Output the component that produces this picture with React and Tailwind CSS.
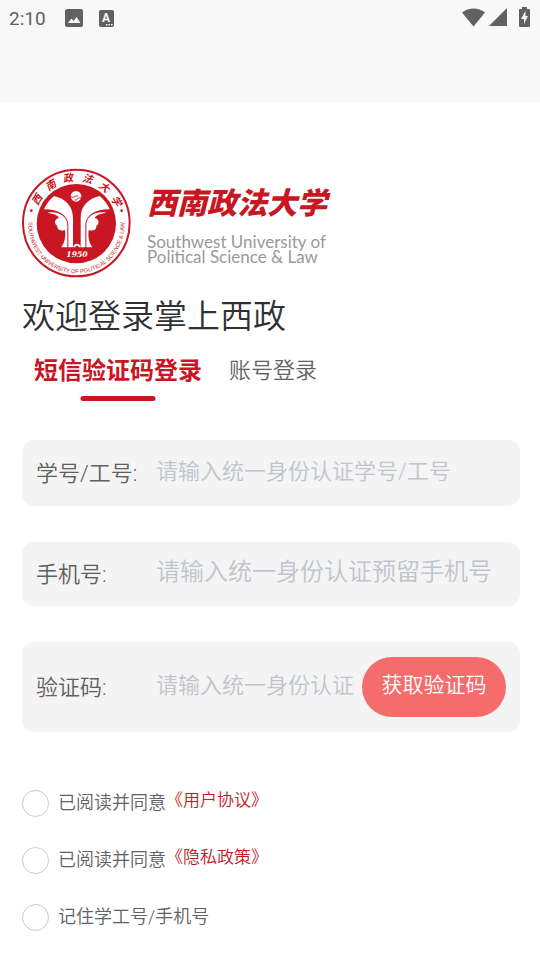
import React, { useState } from 'react'

const sealChars = [
  { char: '西', offset: '17%' },
  { char: '南', offset: '31%' },
  { char: '政', offset: '44%' },
  { char: '法', offset: '58%' },
  { char: '大', offset: '71%' },
  { char: '学', offset: '84%' },
]

const Seal = () => (
  <svg viewBox="0 0 330 330" className="w-[110px] h-[110px] shrink-0" role="img" aria-label="西南政法大学">
    <defs>
      <path id="sealTop" d="M 37 165 A 126 126 0 0 1 289 165" />
      <path id="sealBottom" d="M 21 148 A 144 144 0 1 0 305 148" />
      <g id="arm">
        <path d="M96 84 C130 92 153 114 153 150 V238 H139 V170 C137 142 112 124 66 124 C72 108 84 94 96 84 Z" />
        <path d="M136 238 H118 C130 220 131 204 129 186 C122 190 104 188 106 174 C95 168 98 150 112 150 C106 142 98 137 76 134 C112 128 136 146 136 172 Z" />
      </g>
    </defs>
    <circle cx="163" cy="165" r="160" fill="#fff" stroke="#c81623" strokeWidth="6" />
    <circle cx="163" cy="167" r="119" fill="#c81623" />
    <g fill="#c81623">
      {sealChars.map(({ char, offset }) => (
        <text key={char} fontSize="31" fontWeight="700" fontStyle="italic" fontFamily="'Noto Sans CJK SC', sans-serif" textAnchor="middle">
          <textPath href="#sealTop" startOffset={offset}>{char}</textPath>
        </text>
      ))}
      <text fontSize="17" fontWeight="400" fontFamily="'Liberation Sans Narrow', sans-serif" textAnchor="middle">
        <textPath href="#sealBottom" startOffset="50%">SOUTHWEST UNIVERSITY OF POLITICAL SCIENCE &amp; LAW</textPath>
      </text>
      <circle cx="28" cy="128" r="4" />
      <circle cx="299" cy="128" r="4" />
    </g>
    <g fill="#fff">
      <use href="#arm" />
      <use href="#arm" transform="translate(329 0) scale(-1 1)" />
      <circle cx="162" cy="85" r="16" />
      <path d="M154 238 C154 224 176 224 176 238 H170 C170 232 160 232 160 238 Z" />
    </g>
    <path d="M145 84 C154 94 160 80 168 84 M158 96 C166 98 168 86 179 90" fill="none" stroke="#c81623" strokeWidth="3" />
    <text x="165" y="266" fontSize="23" fontWeight="700" fontStyle="italic" fontFamily="'DejaVu Serif', serif" textAnchor="middle" fill="#fff">1950</text>
  </svg>
)

const StatusBar = () => (
  <div className="flex h-9 items-center justify-between pl-[9px] pr-[10px] text-[#616161]">
    <div className="flex items-center">
      <span className="pt-[2px] text-[19px] font-normal">2:10</span>
      <svg viewBox="0 0 18 18" className="ml-[19px] h-[18px] w-[18px]">
        <rect width="18" height="18" rx="2" fill="currentColor" />
        <path d="M3 14 L6.5 9.5 L8.5 12 L11.5 8 L15.5 14 Z" fill="#f8f8f8" />
      </svg>
      <svg viewBox="0 0 15 17" className="ml-4 h-[17px] w-[15px]">
        <rect width="15" height="17" rx="2" fill="currentColor" />
        <text x="7" y="12" fontSize="12" fontWeight="700" textAnchor="middle" fill="#f8f8f8">A</text>
        <path d="M7 14h1.500v1.500h-1.500z M9.500 14h1.500v1.500h-1.500z M12 14h1.500v1.500h-1.500z" fill="#f8f8f8" />
      </svg>
    </div>
    <div className="flex items-center pb-[2px]">
      <svg viewBox="0 0 23 19" className="h-[19px] w-[23px]">
        <path d="M0 4.500 C7 -1 16 -1 23 4.500 L11.500 18.500 Z" fill="currentColor" />
      </svg>
      <svg viewBox="0 0 18 18" className="ml-1 h-[18px] w-[18px]">
        <path d="M18 0 V18 H0 Z" fill="currentColor" />
      </svg>
      <svg viewBox="0 0 11 20" className="ml-3 h-5 w-[11px]">
        <path d="M3 0 H8 V2 H10 Q11 2 11 3 V19 Q11 20 10 20 H1 Q0 20 0 19 V3 Q0 2 1 2 H3 Z" fill="currentColor" />
        <path d="M6.500 4 L2 12 H5 V17 L9 9 H6.500 Z" fill="#f8f8f8" />
      </svg>
    </div>
  </div>
)

const Field = ({ id, label, placeholder, className, inputClass, children }) => (
  <div className={`flex items-center rounded-xl bg-[#f4f4f4] px-[14px] ${className}`}>
    <label htmlFor={id} className="w-[120px] shrink-0 text-[22px] text-[#606060]">{label}</label>
    <input
      id={id}
      placeholder={placeholder}
      className={`min-w-0 flex-1 bg-transparent pb-1 outline-none placeholder:text-[#c0c4cc] ${inputClass}`}
    />
    {children}
  </div>
)

const Check = ({ id, label, link }) => (
  <div className="flex h-[57px] items-center">
    <input
      id={id}
      type="checkbox"
      className="h-[27px] w-[27px] shrink-0 appearance-none rounded-full border border-[#c8c9cc] bg-white checked:border-[#c81623] checked:bg-[#c81623]"
    />
    <label htmlFor={id} className="ml-[9px] pb-[2px] text-[18px] text-[#606266]">{label}</label>
    {link && <a href="#" className="pb-[6px] text-[17px] text-[#c81623]">{link}</a>}
  </div>
)

const App = () => {
  const [tab, setTab] = useState('sms')

  const tabClass = (name) =>
    tab === name ? 'text-[24px] font-bold text-[#c81623]' : 'text-[22px] text-[#606266]'

  return (
    <div className="min-h-screen bg-white font-[350] font-['Roboto','Noto_Sans_CJK_SC',sans-serif]">
      <header className="h-[102px] bg-[#f8f8f8]">
        <StatusBar />
      </header>

      <main className="pl-[22px] pr-5 pt-[66px]">
        <div className="flex items-center">
          <Seal />
          <div className="ml-[15px]">
            <div className="whitespace-nowrap text-[30px] leading-[44px] font-black italic text-[#c81623]">西南政法大学</div>
            <div className="mt-2 whitespace-nowrap font-['Lato',sans-serif] text-[17px] leading-[15px] font-normal text-[#999]">
              Southwest University of<br />Political Science &amp; Law
            </div>
          </div>
        </div>

        <h1 className="mt-3 text-[33px] leading-[54px] text-[#303133]">欢迎登录掌上西政</h1>

        <div className="mt-[6px] flex items-start">
          <button type="button" onClick={() => setTab('sms')} className={`relative ml-3 h-[51px] pb-[10px] leading-10 ${tabClass('sms')}`}>
            短信验证码登录
            {tab === 'sms' && <span className="absolute bottom-0 left-1/2 h-[5px] w-[75px] -translate-x-1/2 rounded-sm bg-[#c81623]" />}
          </button>
          <button type="button" onClick={() => setTab('account')} className={`relative ml-[27px] h-[51px] pb-[10px] leading-10 ${tabClass('account')}`}>
            账号登录
            {tab === 'account' && <span className="absolute bottom-0 left-1/2 h-[5px] w-[75px] -translate-x-1/2 rounded-sm bg-[#c81623]" />}
          </button>
        </div>

        <form onSubmit={(e) => e.preventDefault()}>
          <Field id="account" label="学号/工号:" placeholder="请输入统一身份认证学号/工号" className="mt-[39px] h-[66px]" inputClass="text-[22px]" />
          <Field id="phone" label="手机号:" placeholder="请输入统一身份认证预留手机号" className="mt-9 h-16" inputClass="text-[24px]" />
          <Field id="code" label="验证码:" placeholder="请输入统一身份认证" className="mt-9 h-[90px]" inputClass="text-[22px]">
            <button type="button" className="h-[60px] w-36 shrink-0 rounded-full bg-[#f56c6c] pb-[2px] text-[21px] text-white">获取验证码</button>
          </Field>

          <div className="mt-[43px]">
            <Check id="agreement" label="已阅读并同意" link="《用户协议》" />
            <Check id="privacy" label="已阅读并同意" link="《隐私政策》" />
            <Check id="remember" label="记住学工号/手机号" />
          </div>
        </form>
      </main>
    </div>
  )
}

export default App
